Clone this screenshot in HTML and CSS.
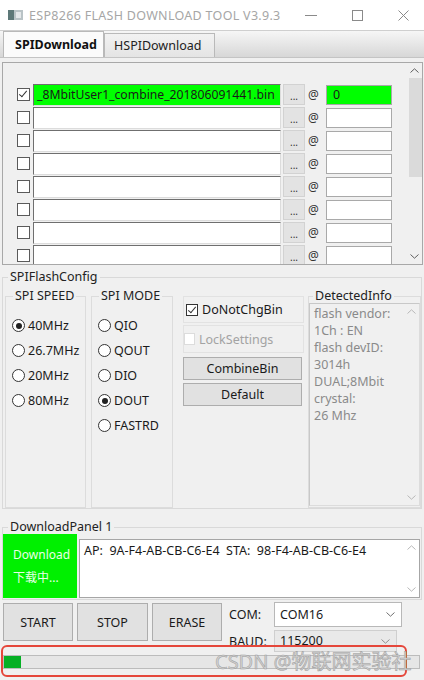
FILE: index.html
```html
<!DOCTYPE html>
<html lang="zh-CN">
<head>
  <meta charset="UTF-8">
  <meta name="viewport" content="width=device-width, initial-scale=1.0">
  <title>ESP8266 FLASH DOWNLOAD TOOL V3.9.3</title>
  <link rel="stylesheet" href="styles.css">
</head>
<body>
  <div class="window">
    <div class="titlebar">
      <svg class="app-icon" width="15" height="10" viewBox="0 0 15 10">
        <rect x="0" y="0" width="6" height="10" fill="#5d7878"/>
        <rect x="6" y="0" width="9" height="10" fill="#b9c3c6"/>
        <rect x="8" y="2" width="5" height="6" fill="#e4e8ea"/>
      </svg>
      <span class="title">ESP8266 FLASH DOWNLOAD TOOL V3.9.3</span>
      <div class="win-btns">
        <svg width="12" height="12" viewBox="0 0 12 12"><line x1="0" y1="6.5" x2="12" y2="6.5" stroke="#8a8a8a" stroke-width="1"/></svg>
        <svg width="11" height="11" viewBox="0 0 11 11"><rect x="0.5" y="0.5" width="10" height="10" fill="none" stroke="#8a8a8a" stroke-width="1"/></svg>
        <svg width="11" height="11" viewBox="0 0 11 11"><path d="M0.5 0.5 L10.5 10.5 M10.5 0.5 L0.5 10.5" stroke="#8a8a8a" stroke-width="1"/></svg>
      </div>
    </div>

    <div class="tabbar">
      <div class="tab active">SPIDownload</div>
      <div class="tab">HSPIDownload</div>
    </div>

    <div class="filelist">
      <div class="rows">
        <div class="row">
          <div class="chk-cell"><span class="check on"></span></div>
          <div class="path green">_8MbitUser1_combine_201806091441.bin</div>
          <div class="dots">...</div>
          <div class="at">@</div>
          <div class="offset green">0</div>
        </div>
        <div class="row">
          <div class="chk-cell"><span class="check"></span></div>
          <div class="path"></div><div class="dots">...</div><div class="at">@</div><div class="offset"></div>
        </div>
        <div class="row">
          <div class="chk-cell"><span class="check"></span></div>
          <div class="path"></div><div class="dots">...</div><div class="at">@</div><div class="offset"></div>
        </div>
        <div class="row">
          <div class="chk-cell"><span class="check"></span></div>
          <div class="path"></div><div class="dots">...</div><div class="at">@</div><div class="offset"></div>
        </div>
        <div class="row">
          <div class="chk-cell"><span class="check"></span></div>
          <div class="path"></div><div class="dots">...</div><div class="at">@</div><div class="offset"></div>
        </div>
        <div class="row">
          <div class="chk-cell"><span class="check"></span></div>
          <div class="path"></div><div class="dots">...</div><div class="at">@</div><div class="offset"></div>
        </div>
        <div class="row">
          <div class="chk-cell"><span class="check"></span></div>
          <div class="path"></div><div class="dots">...</div><div class="at">@</div><div class="offset"></div>
        </div>
        <div class="row">
          <div class="chk-cell"><span class="check"></span></div>
          <div class="path"></div><div class="dots">...</div><div class="at">@</div><div class="offset"></div>
        </div>
      </div>
      <div class="vscroll">
        <div class="arrow"><svg width="9" height="5" viewBox="0 0 9 5"><path d="M0.5 4.5 L4.5 0.8 L8.5 4.5" fill="none" stroke="#606060"/></svg></div>
        <div class="track"><div class="thumb"></div></div>
        <div class="arrow"><svg width="9" height="5" viewBox="0 0 9 5"><path d="M0.5 0.5 L4.5 4.2 L8.5 0.5" fill="none" stroke="#606060"/></svg></div>
      </div>
    </div>

    <fieldset class="group cfg">
      <legend>SPIFlashConfig</legend>
      <div class="cfg-row">
        <fieldset class="group inner speed">
          <legend>SPI SPEED</legend>
          <div class="radios">
            <div class="radio-row"><span class="radio on"></span>40MHz</div>
            <div class="radio-row"><span class="radio"></span>26.7MHz</div>
            <div class="radio-row"><span class="radio"></span>20MHz</div>
            <div class="radio-row"><span class="radio"></span>80MHz</div>
          </div>
        </fieldset>
        <fieldset class="group inner mode">
          <legend>SPI MODE</legend>
          <div class="radios">
            <div class="radio-row"><span class="radio"></span>QIO</div>
            <div class="radio-row"><span class="radio"></span>QOUT</div>
            <div class="radio-row"><span class="radio"></span>DIO</div>
            <div class="radio-row"><span class="radio on"></span>DOUT</div>
            <div class="radio-row"><span class="radio"></span>FASTRD</div>
          </div>
        </fieldset>
        <div class="midcol">
          <div class="opt"><span class="check on"></span>DoNotChgBin</div>
          <div class="opt disabled"><span class="check off"></span>LockSettings</div>
          <button class="btn small first">CombineBin</button>
          <button class="btn small">Default</button>
        </div>
        <fieldset class="group inner info">
          <legend>DetectedInfo</legend>
          <div class="infobox">
            <div class="infotext">
              flash vendor:<br>1Ch : EN<br>flash devID:<br>3014h<br>DUAL;8Mbit<br>crystal:<br>26 Mhz
            </div>
            <div class="vscroll thin">
              <div class="arrow"><svg width="9" height="5" viewBox="0 0 9 5"><path d="M0.5 4.5 L4.5 0.8 L8.5 4.5" fill="none" stroke="#b8b8b8"/></svg></div>
              <div class="track"></div>
              <div class="arrow"><svg width="9" height="5" viewBox="0 0 9 5"><path d="M0.5 0.5 L4.5 4.2 L8.5 0.5" fill="none" stroke="#b8b8b8"/></svg></div>
            </div>
          </div>
        </fieldset>
      </div>
    </fieldset>

    <fieldset class="group dl">
      <legend>DownloadPanel 1</legend>
      <div class="dl-row">
        <div class="dl-status">Download<br>下载中...</div>
        <div class="macbox">
          <div class="mactext">AP:&nbsp; 9A-F4-AB-CB-C6-E4&nbsp; STA:&nbsp; 98-F4-AB-CB-C6-E4</div>
          <div class="vscroll thin">
            <div class="arrow"><svg width="9" height="5" viewBox="0 0 9 5"><path d="M0.5 4.5 L4.5 0.8 L8.5 4.5" fill="none" stroke="#b8b8b8"/></svg></div>
            <div class="track"></div>
            <div class="arrow"><svg width="9" height="5" viewBox="0 0 9 5"><path d="M0.5 0.5 L4.5 4.2 L8.5 0.5" fill="none" stroke="#b8b8b8"/></svg></div>
          </div>
        </div>
      </div>
    </fieldset>

    <div class="controls">
      <button class="btn big">START</button>
      <button class="btn big">STOP</button>
      <button class="btn big">ERASE</button>
      <div class="ports">
        <div class="port-row">
          <span class="port-label">COM:</span>
          <div class="select com">COM16
            <svg width="9" height="5" viewBox="0 0 9 5"><path d="M0.5 0.5 L4.5 4.2 L8.5 0.5" fill="none" stroke="#707070"/></svg>
          </div>
        </div>
        <div class="port-row second">
          <span class="port-label">BAUD:</span>
          <div class="select baud">115200
            <svg width="9" height="5" viewBox="0 0 9 5"><path d="M0.5 0.5 L4.5 4.2 L8.5 0.5" fill="none" stroke="#909090"/></svg>
          </div>
        </div>
      </div>
    </div>

    <div class="progress"><div class="bar" style="width: 17px"></div></div>

    <div class="mark"></div>
    <div class="watermark">CSDN @物联网实验社</div>
  </div>
</body>
</html>
```

FILE: styles.css
```css
body {
  margin: 0;
  padding: 0;
  font-family: "Noto Sans", "Noto Sans CJK SC", sans-serif;
  font-size: 12px;
  color: #1a1a1a;
  background-color: #f0f0f0;
}

.window {
  position: relative;
  width: 424px;
  height: 680px;
  overflow: hidden;
  background-color: #f0f0f0;
}

/* title bar */
.titlebar {
  display: flex;
  align-items: center;
  height: 30px;
  background-color: #fff;
}

.app-icon {
  margin-left: 8px;
}

.title {
  margin-left: 6px;
  color: #a6a6a6;
  font-size: 12.5px;
  letter-spacing: 0.3px;
}

.win-btns {
  margin-left: auto;
  display: flex;
  align-items: center;
  gap: 35px;
  padding-right: 15px;
}

/* tabs */
.tabbar {
  display: flex;
  align-items: flex-end;
  height: 28px;
  box-sizing: border-box;
  padding-left: 3px;
  border-top: 1px solid #cfcfcf;
  border-bottom: 1px solid #c4c4c4;
  background: linear-gradient(#f6f6f6, #d7d7d7);
}

.tab {
  height: 24px;
  line-height: 23px;
  box-sizing: border-box;
  padding: 0 10px;
  border: 1px solid #b9b9b9;
  border-bottom: none;
  background: linear-gradient(#f2f2f2, #e4e4e4);
  color: #222;
  font-size: 12.5px;
}

.tab.active {
  height: 26px;
  line-height: 25px;
  width: 101px;
  padding: 0 11px;
  background: #fbfbfb;
  font-weight: bold;
  color: #111;
}

.tab + .tab {
  width: 111px;
  padding-left: 9px;
}

/* file list */
.filelist {
  display: flex;
  height: 203px;
  margin: 4px 1px 0 2px;
  box-sizing: border-box;
  border: 1px solid #a8a8a8;
  overflow: hidden;
}

.rows {
  flex: 1;
  padding-top: 20px;
}

.row {
  display: flex;
  align-items: center;
  height: 23px;
}

.chk-cell {
  width: 30px;
  padding-left: 14px;
  box-sizing: border-box;
  display: flex;
  align-items: center;
}

.check {
  display: inline-block;
  position: relative;
  width: 12px;
  height: 12px;
  box-sizing: border-box;
  border: 1px solid #333;
  background-color: #fff;
  flex: none;
}

.check.on::after {
  content: "";
  position: absolute;
  left: 3px;
  top: 0px;
  width: 3px;
  height: 7px;
  border: solid #333;
  border-width: 0 1.3px 1.3px 0;
  transform: rotate(40deg);
}

.chk-cell .check {
  border-color: #5a5a5a;
  width: 13px;
  height: 13px;
}

.path {
  width: 248px;
  height: 22px;
  margin-top: 1px;
  box-sizing: border-box;
  border: 1px solid;
  border-color: #6f6f6f #dcdcdc #dcdcdc #6f6f6f;
  background-color: #fff;
  padding-left: 3px;
  line-height: 20px;
  font-size: 12.2px;
  white-space: nowrap;
  overflow: hidden;
}

.green {
  background-color: #00ff00;
}

.dots {
  width: 22px;
  height: 21px;
  margin-left: 2px;
  box-sizing: border-box;
  border: 1px solid #d2d2d2;
  background-color: #e3e3e3;
  text-align: center;
  line-height: 22px;
  font-size: 10px;
  color: #333;
}

.at {
  width: 21px;
  padding-left: 3px;
  box-sizing: border-box;
  color: #333;
  font-size: 12px;
}

.offset {
  width: 66px;
  height: 20px;
  box-sizing: border-box;
  border: 1px solid #a9a9a9;
  background-color: #fff;
  padding-left: 6px;
  line-height: 18px;
  font-size: 12.5px;
}

.offset.green {
  background-color: #00ff00;
}

/* scroll bars */
.vscroll {
  width: 15px;
  display: flex;
  flex-direction: column;
  background-color: #f0f0f0;
}

.vscroll .arrow {
  height: 15px;
  display: flex;
  align-items: center;
  justify-content: center;
}

.vscroll .track {
  flex: 1;
}

.vscroll .thumb {
  height: 99px;
  margin: 0 0 0 2px;
  background-color: #dadada;
}

.vscroll.thin {
  width: 15px;
  background-color: transparent;
}

/* group boxes */
.group {
  margin: 0;
  padding: 0;
  min-width: 0;
  box-sizing: border-box;
  border: 1px solid #d9d9d9;
}

.group legend {
  padding: 0 2px;
  margin-left: 5px;
  line-height: 18px;
  font-size: 12.5px;
  color: #222;
}

.cfg {
  margin: 3px 2px 0 2px;
  padding-bottom: 0;
}

.cfg-row {
  display: flex;
  align-items: flex-start;
  padding: 3px 0 0 2px;
}

.inner {
  height: 219px;
  border-color: #dcdcdc;
}

.inner legend {
  line-height: 14px;
  margin-left: 7px;
}

.speed {
  width: 81px;
}

.mode {
  width: 82px;
  margin-left: 5px;
}

.info {
  width: 113px;
  margin-left: 4px;
}

.info legend {
  margin-left: 4px;
}

.radios {
  padding: 10px 0 0 6px;
}

.radio-row {
  display: flex;
  align-items: center;
  height: 25px;
  font-size: 12.5px;
}

.radio {
  position: relative;
  width: 13px;
  height: 13px;
  box-sizing: border-box;
  border: 1px solid #333;
  border-radius: 50%;
  background-color: #fff;
  margin-right: 3px;
}

.radio.on::after {
  content: "";
  position: absolute;
  left: 2.5px;
  top: 2.5px;
  width: 6px;
  height: 6px;
  border-radius: 50%;
  background-color: #222;
}

.midcol {
  width: 121px;
  margin: 7px 0 0 10px;
  display: flex;
  flex-direction: column;
}

.opt {
  display: flex;
  align-items: center;
  height: 27px;
  box-sizing: border-box;
  border: 1px solid #e2e2e2;
  padding-left: 2px;
  font-size: 12.5px;
  gap: 4px;
}

.opt.disabled {
  height: 28px;
  margin-top: 2px;
  padding-left: 0;
  color: #a3a3a3;
}

.check.off {
  border-color: #dcdcdc;
  width: 11px;
  height: 12px;
}

.btn {
  font-family: inherit;
  font-size: 12.5px;
  color: #1a1a1a;
  background-color: #e1e1e1;
  border: 1px solid #adadad;
  padding: 0;
  cursor: pointer;
}

.btn.small {
  height: 23px;
  width: 119px;
  margin-top: 3px;
}

.btn.small.first {
  margin-top: 4px;
}

.infobox {
  display: flex;
  height: 203px;
  border: 1px solid #dcdcdc;
  border-left-color: #c8c8c8;
  border-top-color: #c8c8c8;
  box-sizing: border-box;
}

.infotext {
  flex: 1;
  padding: 1px 0 0 4px;
  line-height: 17px;
  font-size: 12.5px;
  color: #8a8a8a;
}

/* download panel */
.dl {
  margin: 11px 2px 0 2px;
  padding-bottom: 1px;
}

.dl legend {
  line-height: 14px;
}

.dl-row {
  display: flex;
  align-items: flex-start;
}

.dl-status {
  width: 74px;
  height: 64px;
  box-sizing: border-box;
  padding: 9px 0 0 10px;
  background-color: #00f000;
  color: #e8ffe8;
  font-size: 12px;
  line-height: 23px;
}

.macbox {
  display: flex;
  width: 341px;
  height: 59px;
  margin: 5px 0 0 2px;
  box-sizing: border-box;
  border: 1px solid #a6a6a6;
  background-color: #fff;
}

.mactext {
  flex: 1;
  padding: 2px 0 0 4px;
  font-size: 12.5px;
  white-space: pre;
}

/* bottom controls */
.controls {
  display: flex;
  align-items: flex-start;
  padding-left: 3px;
  height: 52px;
}

.btn.big {
  height: 38px;
  width: 70px;
  margin-top: 3px;
  font-size: 12.5px;
}

.btn.big + .btn.big {
  margin-left: 4px;
  width: 71px;
}

.btn.big + .btn.big + .btn.big {
  width: 70px;
}

.ports {
  margin-left: 7px;
  padding-top: 2px;
}

.port-row {
  display: flex;
  align-items: center;
}

.port-row.second {
  margin-top: 3px;
}

.port-label {
  width: 45px;
  font-size: 12.5px;
}

.select {
  display: flex;
  align-items: center;
  justify-content: space-between;
  box-sizing: border-box;
  height: 25px;
  width: 128px;
  padding: 0 6px 0 5px;
  border: 1px solid #b8b8b8;
  background-color: #fff;
  font-size: 12.5px;
}

.select.baud {
  height: 22px;
  width: 123px;
  line-height: 16px;
  background-color: #e9e9e9;
  border-color: #cfcfcf;
}

.progress {
  height: 14px;
  margin: 3px 4px 0 3px;
  box-sizing: border-box;
  border: 1px solid #bcbcbc;
  background-color: #e6e6e6;
}

.progress .bar {
  height: 100%;
  background-color: #06b025;
}

/* screenshot overlays */
.mark {
  position: absolute;
  left: 1px;
  top: 645px;
  width: 406px;
  height: 32px;
  box-sizing: border-box;
  border: 2px solid #e5473b;
  border-radius: 6px;
}

.watermark {
  position: absolute;
  left: 215px;
  top: 651px;
  font-size: 20px;
  line-height: 21px;
  color: #d4d4d4;
  -webkit-text-stroke: 0.5px #9a9a9a;
  white-space: nowrap;
}
```
